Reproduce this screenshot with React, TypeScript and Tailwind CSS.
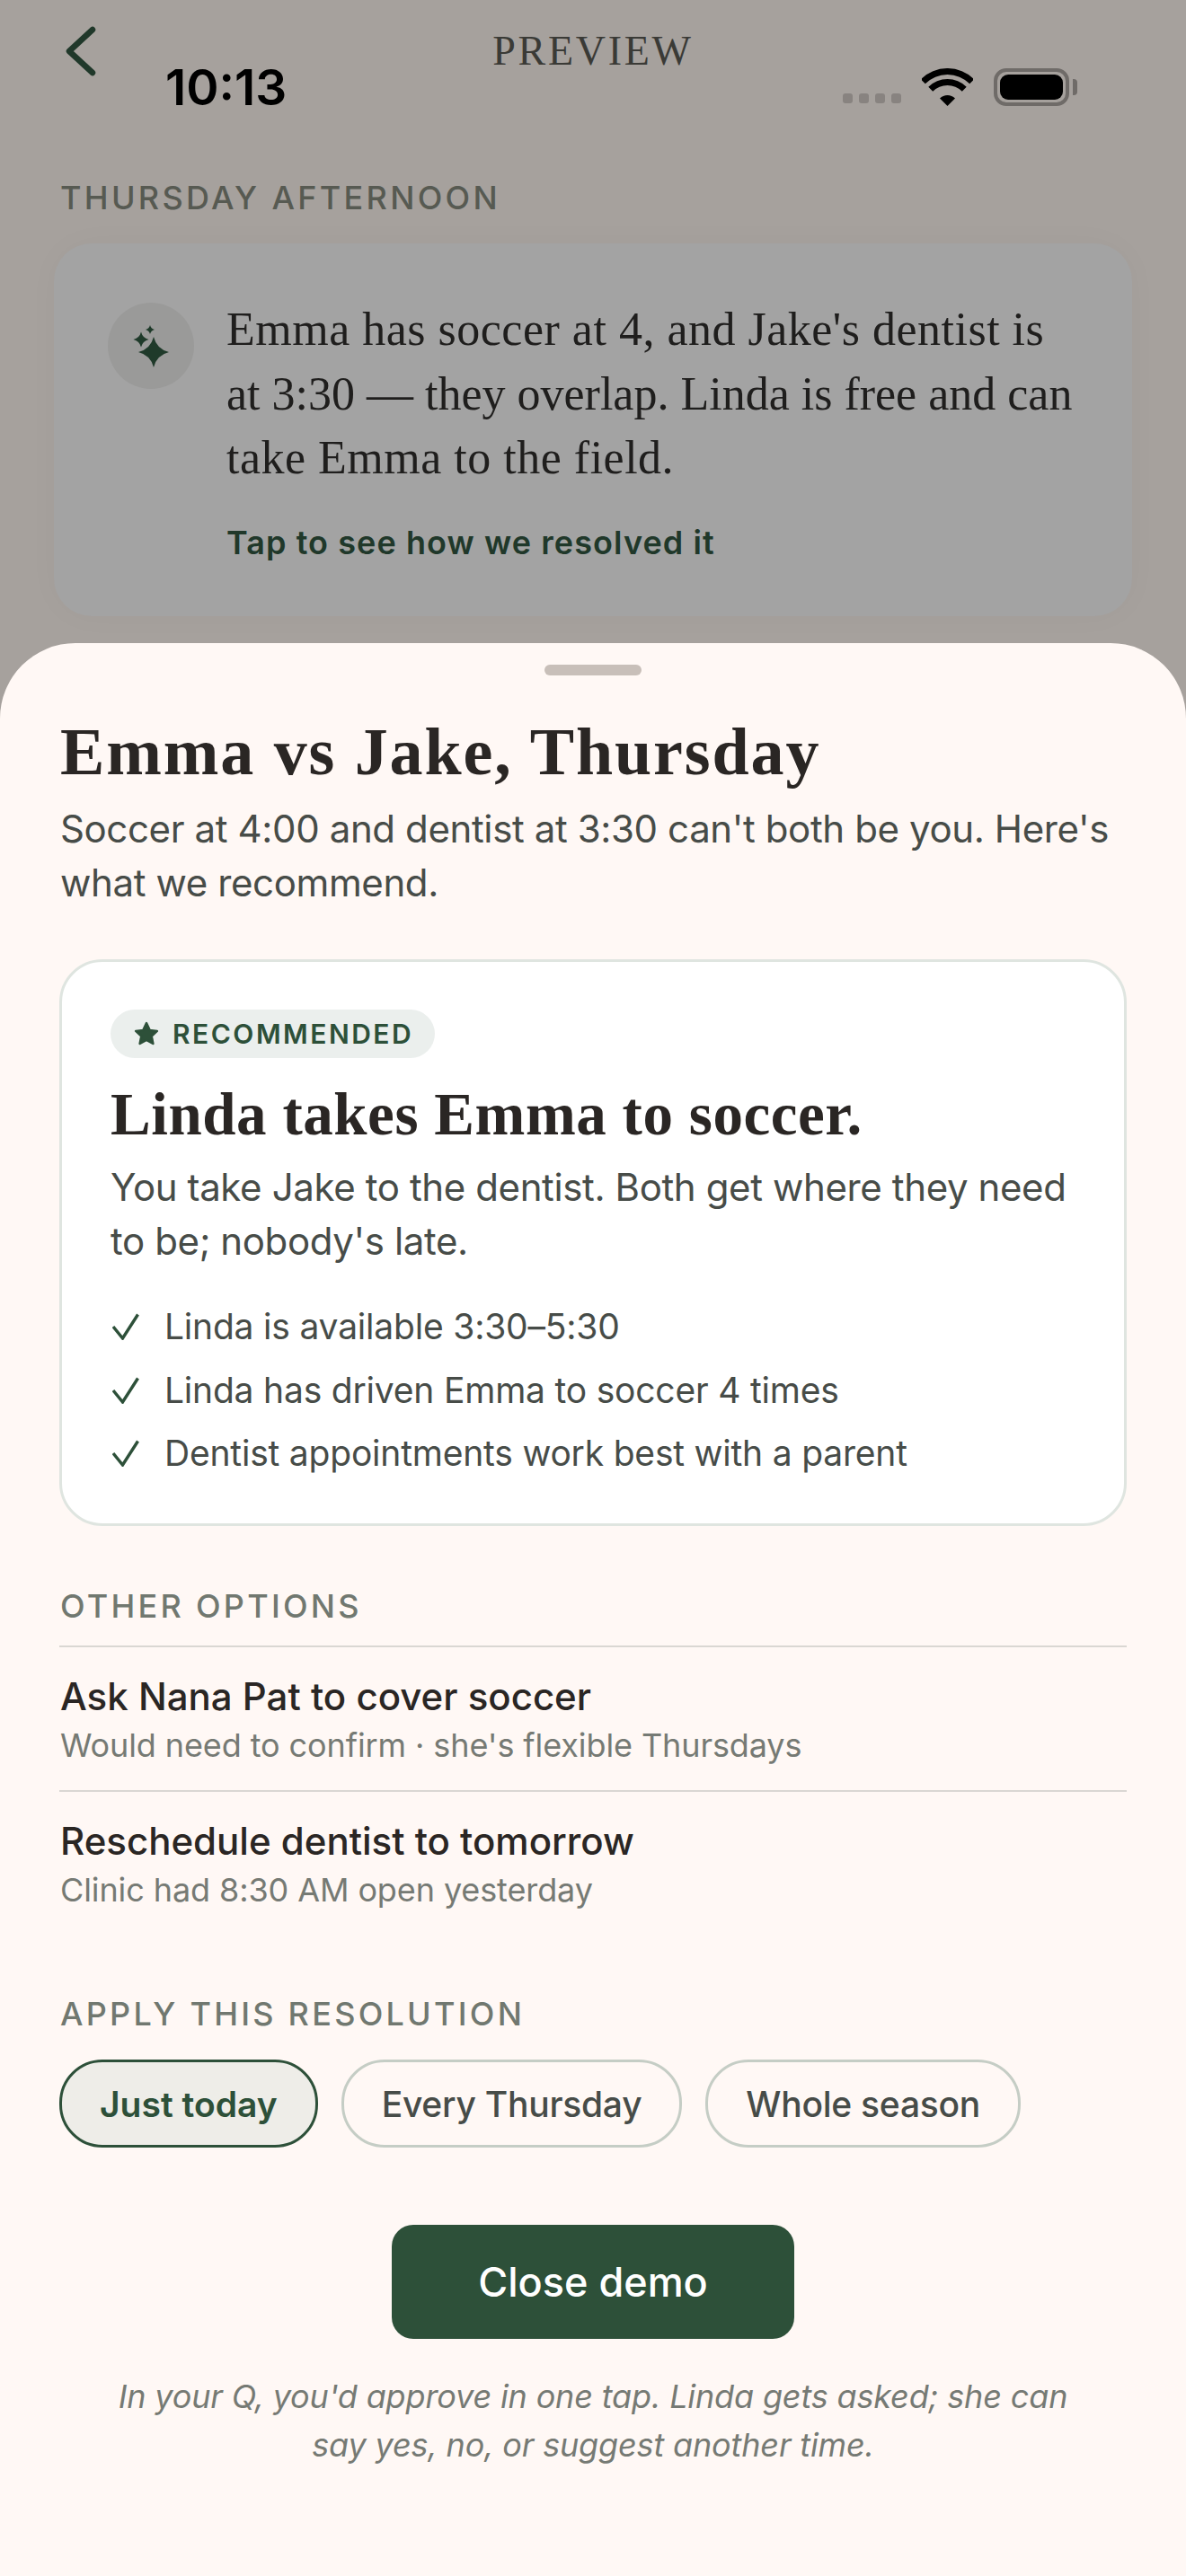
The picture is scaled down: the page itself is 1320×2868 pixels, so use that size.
const serif = "font-['Liberation_Serif',serif]";

function star(cx: number, cy: number, r: number) {
  const k = r * 0.2;
  return `M${cx} ${cy - r}Q${cx + k} ${cy - k} ${cx + r} ${cy}Q${cx + k} ${cy + k} ${cx} ${cy + r}Q${cx - k} ${cy + k} ${cx - r} ${cy}Q${cx - k} ${cy - k} ${cx} ${cy - r}Z`;
}

function StatusBar() {
  return (
    <div className="absolute left-0 top-[67px] flex h-[60px] w-full items-center justify-between pl-[184px] pr-[130px]">
      <span className="text-[55px] font-semibold leading-[60px] text-black">10:13</span>
      <div className="flex items-end">
        <div className="mb-[3px] flex gap-[7px]">
          <span className="h-[11px] w-[11px] rounded-[3px] bg-[#888380]" />
          <span className="h-[11px] w-[11px] rounded-[3px] bg-[#888380]" />
          <span className="h-[11px] w-[11px] rounded-[3px] bg-[#888380]" />
          <span className="h-[11px] w-[11px] rounded-[3px] bg-[#888380]" />
        </div>
        <svg className="ml-[23px]" width="57" height="42" viewBox="0 0 57 42">
          <path d="M-1.2 12.3A42 42 0 0 1 58.2 12.3L53.2 17.3A35 35 0 0 0 3.8 17.3Z" fill="#000" />
          <path d="M7.3 20.8A30 30 0 0 1 49.7 20.8L44.8 25.7A23 23 0 0 0 12.2 25.7Z" fill="#000" />
          <path d="M20 33.5A12 12 0 0 1 37 33.5L28.5 42Z" fill="#000" />
        </svg>
        <div className="relative ml-[23px] flex h-[42px] w-[84px] items-center justify-center rounded-[14px] border-[4px] border-[#6f6b68]">
          <span className="h-[28px] w-[70px] rounded-[9px] bg-black" />
          <span className="absolute right-[-13px] h-[18px] w-[5px] rounded-r-[4px] bg-[#6f6b68]" />
        </div>
      </div>
    </div>
  );
}

function Backdrop() {
  return (
    <div className="relative h-[716px] bg-[#a6a19d]">
      <div className="flex h-[114px] items-center justify-between pl-[70px] pr-[70px]">
        <svg width="38" height="56" viewBox="0 0 38 56" fill="none" stroke="#20382a" strokeWidth="6.5" strokeLinecap="round" strokeLinejoin="round">
          <path d="M33 4L7 28l26 24" />
        </svg>
        <span className={`${serif} text-[46px] tracking-[2.7px] leading-[54px] text-[#3a3a36]`}>PREVIEW</span>
        <span className="w-[38px]" />
      </div>
      <StatusBar />
      <div className="mt-[79px] px-[67px] text-[36px] font-medium leading-[54px] tracking-[3.3px] text-[#575a52]">
        THURSDAY AFTERNOON
      </div>
      <div className="mx-[60px] mt-[24px] flex h-[415px] gap-[36px] rounded-[42px] bg-[#a3a3a3] pl-[60px] pr-[20px] pt-[60px] shadow-[0_0_40px_rgba(0,0,0,0.025)]">
        <div className="mt-[6px] flex h-[96px] w-[96px] shrink-0 items-center justify-center rounded-full bg-[#9a9a99]">
          <svg width="96" height="96" viewBox="0 0 96 96" fill="#1f3a2a">
            <path d={star(51, 55, 17)} />
            <path d={star(37, 41, 8.5)} />
            <path d={star(47, 30, 5)} />
          </svg>
        </div>
        <div>
          <p className={`${serif} text-[52px] leading-[71.5px] tracking-[0.5px] text-[#1f1e1d]`}>
            Emma has soccer at 4, and Jake's dentist is
            <br />
            <span className="tracking-[0px]">at 3:30 — they overlap. Linda is free and can</span>
            <br />
            take Emma to the field.
          </p>
          <p className="mt-[31px] text-[36px] font-semibold leading-[54px] tracking-[1.08px] text-[#20382a]">
            Tap to see how we resolved it
          </p>
        </div>
      </div>
    </div>
  );
}

function Check() {
  return (
    <svg className="shrink-0" width="30" height="30" viewBox="0 0 30 30" fill="none" stroke="#2d5039" strokeWidth="3.4">
      <path d="M1 15l10.5 13L28.5 1.5" />
    </svg>
  );
}

function Label({ children, className }: { children: string; className?: string }) {
  return (
    <div className={`text-[36px] font-medium leading-[54px] tracking-[3.25px] text-[#717870] ${className ?? ""}`}>
      {children}
    </div>
  );
}

const reasons = [
  "Linda is available 3:30–5:30",
  "Linda has driven Emma to soccer 4 times",
  "Dentist appointments work best with a parent",
];

const options = [
  { title: "Ask Nana Pat to cover soccer", note: "Would need to confirm · she's flexible Thursdays" },
  { title: "Reschedule dentist to tomorrow", note: "Clinic had 8:30 AM open yesterday" },
];

function Sheet() {
  return (
    <div className="relative h-[2152px] rounded-t-[84px] bg-[#fff8f5] px-[66px]">
      <div className="mx-auto h-[36px] w-[108px] pt-[24px]">
        <div className="h-[12px] rounded-full bg-[#c8bfb9]" />
      </div>
      <h1 className={`${serif} mt-[45px] pl-[1px] text-[74px] font-bold leading-[80px] tracking-[1.9px] text-[#2a2624]`}>
        Emma vs Jake, Thursday
      </h1>
      <p className="mt-[16px] pl-[1px] text-[42px] leading-[60px] tracking-[-0.38px] text-[#474c48]">
        Soccer at 4:00 and dentist at 3:30 can't both be you. Here's what we recommend.
      </p>

      {/* Recommended */}
      <div className="mt-[55px] h-[631px] rounded-[48px] border-[3px] border-[#dfe5e0] bg-white pl-[54px] pr-[50px] pt-[53px]">
        <div className="inline-flex h-[54px] items-center gap-[14px] rounded-full bg-[#ebefed] pl-[25px] pr-[24px] text-[30px] font-semibold tracking-[2.5px] text-[#2d5039]">
          <svg width="30" height="30" viewBox="0 0 24 24" fill="#2d5039" stroke="#2d5039" strokeWidth="2" strokeLinejoin="round">
            <path d="M12 2.5l2.9 6.2 6.6.8-4.9 4.6 1.3 6.7L12 17.5l-5.9 3.3 1.3-6.7L2.5 9.5l6.6-.8z" />
          </svg>
          RECOMMENDED
        </div>
        <h2 className={`${serif} mt-[26px] text-[67px] font-bold leading-[72px] tracking-[0.55px] text-[#2a2624]`}>
          Linda takes Emma to soccer.
        </h2>
        <p className="mt-[16px] text-[42px] leading-[60px] tracking-[-0.38px] text-[#474c48]">
          You take Jake to the dentist. Both get where they need to be; nobody's late.
        </p>
        <div className="mt-[30px]">
          {reasons.map((r) => (
            <div key={r} className="flex h-[70.5px] items-center gap-[28px] pl-[2px] text-[39px] tracking-[-0.2px] text-[#474c48]">
              <Check />
              {r}
            </div>
          ))}
        </div>
      </div>

      {/* Other options */}
      <Label className="mt-[62px] pl-[1px]">OTHER OPTIONS</Label>
      <div className="mt-[17px]">
        {options.map((o) => (
          <div key={o.title} className="h-[161px] border-t-[2px] border-[#dad7d3] pl-[1px] pt-[25px]">
            <div className="text-[42px] font-medium leading-[60px] text-[#2a2624]">{o.title}</div>
            <div className="mt-[-1px] text-[36px] leading-[50px] tracking-[-0.1px] text-[#767a74]">{o.note}</div>
          </div>
        ))}
      </div>

      {/* Apply */}
      <Label className="mt-[61px] pl-[1px]">APPLY THIS RESOLUTION</Label>
      <div className="mt-[24px] flex gap-[26px]">
        <button className="h-[98px] rounded-[48px] border-[3px] border-[#2d5039] bg-[#eeede8] px-[42px] pt-[2px] text-[39px] font-semibold text-[#2d5039]">
          Just today
        </button>
        <button className="h-[98px] rounded-[48px] border-[3px] border-[#c5cdc5] px-[42px] pt-[2px] text-[39px] font-medium tracking-[-0.25px] text-[#474c48]">
          Every Thursday
        </button>
        <button className="h-[98px] rounded-[48px] border-[3px] border-[#c5cdc5] px-[42px] pt-[2px] text-[39px] font-medium tracking-[-0.25px] text-[#474c48]">
          Whole season
        </button>
      </div>

      <div className="mt-[86px] flex justify-center">
        <button className="h-[127px] w-[448px] rounded-[24px] bg-[#2d5039] text-[45px] font-medium text-white">
          Close demo
        </button>
      </div>

      <p className="mx-auto mt-[37px] w-[1100px] text-center text-[36px] italic leading-[54px] tracking-[-0.15px] text-[#767a74]">
        In your Q, you'd approve in one tap. Linda gets asked; she can say yes, no, or suggest another time.
      </p>
    </div>
  );
}

export default function App() {
  return (
    <div className="h-[2868px] w-[1320px] overflow-hidden bg-[#a6a19d] font-['Inter',sans-serif]">
      <Backdrop />
      <Sheet />
    </div>
  );
}
